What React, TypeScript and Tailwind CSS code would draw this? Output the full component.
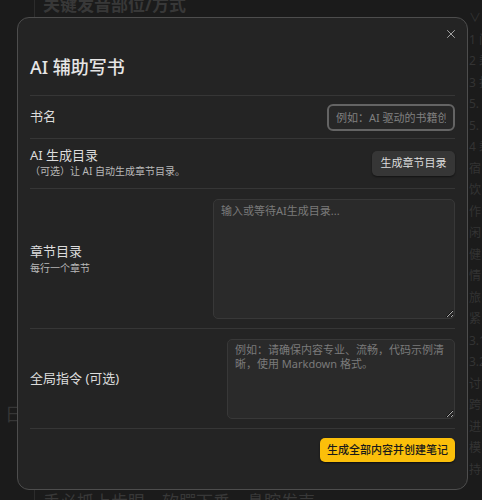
import { X } from 'lucide-react';

const sideItems = [
  '∨ 5. 交通', '1 问', '2 乘', '3 打', '5.', '5.', '4 乘', '宿', '饮', '作', '闲', '健',
  '情', '旅', '紧', '3.1', '3.2', '讨', '跨', '进', '模', '持',
];

const font = "font-['Noto_Sans','Noto_Sans_CJK_SC',sans-serif]";

const Row = ({ children, className = '' }: { children: React.ReactNode; className?: string }) => (
  <div className={`flex items-center justify-between border-t border-[#363636] ${className}`}>{children}</div>
);

export default function App() {
  return (
    <div className={`relative w-[482px] h-[500px] overflow-hidden bg-[#1b1b1b] ${font}`}>
      {/* Fondo: editor detrás del modal */}
      <div className="flex h-full">
        <div className="w-[35px] border-r border-[#2c2c2c] flex items-end pb-[72px] pl-[5px]">
          <span className="text-[18px] text-[#363636]">日</span>
        </div>
        <div className="flex-1 flex flex-col justify-between pl-[8px]">
          <div className="text-[17px] font-bold text-[#383838] leading-[14px] -mt-[2px]">关键发音部位/方式</div>
          <div className="text-[17px] text-[#383838] leading-[14px] translate-y-[9px]">手必抓上步眼，软腭下垂，鼻腔发声</div>
        </div>
        <div className="w-[15px] pt-[10px] pl-[2px] flex flex-col gap-[5px] overflow-hidden whitespace-nowrap">
          {sideItems.map((t, i) => (
            <span key={i} className="text-[12px] leading-[16.5px] text-[#333333]">{t}</span>
          ))}
        </div>
      </div>

      {/* Modal */}
      <div className="absolute left-[17px] top-[17px] w-[451px] h-[473px] rounded-[12px] border border-[#4d4d4d] bg-[#242424] px-[12px]">
        <button className="absolute right-[8px] top-[8px] p-[1px] text-[#b5b5b5]">
          <X size={14} strokeWidth={1.5} />
        </button>
        <h2 className="mt-[38px] text-[18px] leading-[22px] font-medium text-[#e6e6e6]">AI 辅助写书</h2>

        <div className="mt-[17px]">
          <Row className="h-[43px]">
            <span className="text-[13px] text-[#dcdcdc]">书名</span>
            <input
              placeholder="例如：AI 驱动的书籍创作"
              className="w-[128px] h-[27px] rounded-[6px] border-2 border-[#646464] bg-[#272727] px-[7px] text-[11px] text-[#ddd] placeholder:text-[#808080] outline-none"
            />
          </Row>
          <Row className="h-[50px]">
            <div className="flex flex-col -mt-[3px]">
              <span className="text-[13px] leading-[18px] text-[#dcdcdc]">AI 生成目录</span>
              <span className="text-[10px] leading-[14px] text-[#b9b9b9]">（可选）让 AI 自动生成章节目录。</span>
            </div>
            <button className="w-[83px] h-[25px] rounded-[5px] bg-[#363636] text-[11px] text-[#dcdcdc] shadow-[0_1px_2px_rgba(0,0,0,0.5)]">
              生成章节目录
            </button>
          </Row>
          <Row className="h-[140px]">
            <div className="flex flex-col">
              <span className="text-[13px] leading-[18px] text-[#dcdcdc]">章节目录</span>
              <span className="text-[10px] leading-[16px] text-[#b9b9b9]">每行一个章节</span>
            </div>
            <textarea
              placeholder="输入或等待AI生成目录..."
              className="w-[242px] h-[120px] rounded-[5px] border border-[#383838] bg-[#2a2a2a] px-[7px] py-[3px] text-[11px] leading-[16px] text-[#ddd] placeholder:text-[#7a7a7a] outline-none"
            />
          </Row>
          <Row className="h-[100px]">
            <span className="text-[13px] text-[#dcdcdc]">全局指令 (可选)</span>
            <textarea
              placeholder="例如：请确保内容专业、流畅，代码示例清晰，使用 Markdown 格式。"
              className="w-[228px] h-[80px] rounded-[5px] border border-[#383838] bg-[#2a2a2a] px-[7px] py-[3px] text-[11px] leading-[14px] text-[#ddd] placeholder:text-[#7a7a7a] outline-none"
            />
          </Row>
          <div className="flex justify-end border-t border-[#363636] pt-[9px]">
            <button className="w-[135px] h-[24px] rounded-[5px] bg-[#fbbf0a] text-[11px] font-medium text-[#1a1a1a] shadow-[0_1px_2px_rgba(0,0,0,0.6)]">
              生成全部内容并创建笔记
            </button>
          </div>
        </div>
      </div>
    </div>
  );
}
